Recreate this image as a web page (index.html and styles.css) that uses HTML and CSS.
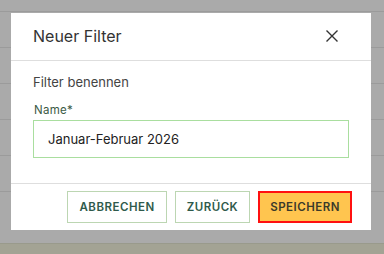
FILE: index.html
```html
<!DOCTYPE html>
<html lang="de">
<head>
    <meta charset="UTF-8">
    <meta name="viewport" content="width=device-width, initial-scale=1.0">
    <title>Neuer Filter</title>
    <link rel="stylesheet" href="styles.css">
</head>
<body>
    <div class="page">
        <div class="row row-top"></div>
        <div class="row"></div>
        <div class="row"></div>
        <div class="row"></div>
        <div class="row"></div>
        <div class="row"></div>
        <div class="spacer"></div>
        <div class="band"></div>
    </div>

    <div class="modal">
        <div class="modal-header">
            <h2 class="modal-title">Neuer Filter</h2>
            <button class="close-btn" aria-label="Schließen">
                <svg width="12" height="12" viewBox="0 0 12 12">
                    <path d="M0.5 0.5 L11.5 11.5 M11.5 0.5 L0.5 11.5" stroke="#333" stroke-width="1.4" fill="none"/>
                </svg>
            </button>
        </div>
        <div class="modal-body">
            <p class="hint">Filter benennen</p>
            <label class="field-label" for="filter-name">Name*</label>
            <input class="field-input" id="filter-name" type="text" value="Januar-Februar 2026">
        </div>
        <div class="modal-footer">
            <button class="btn">Abbrechen</button>
            <button class="btn">Zurück</button>
            <button class="btn btn-primary">Speichern</button>
        </div>
    </div>
</body>
</html>
```

FILE: styles.css
```css
body {
    margin: 0;
    font-family: 'Inter', 'Liberation Sans', sans-serif;
    background: #aaaaaa;
    color: #333;
    width: 384px;
    height: 254px;
    overflow: hidden;
}
.page {
    display: flex;
    flex-direction: column;
    height: 254px;
}
.row {
    height: 35px;
    border-bottom: 1px solid #9b9b9b;
}
.row-top {
    height: 11px;
}
.spacer {
    flex: 1;
}
.band {
    height: 10px;
    background-color: #a3a394;
    border-top: 1px solid #999a8c;
}
.modal {
    position: absolute;
    left: 11px;
    top: 13px;
    width: 360px;
    background-color: #ffffff;
    display: flex;
    flex-direction: column;
}
.modal-header {
    height: 47px;
    display: flex;
    align-items: center;
    justify-content: space-between;
    padding: 0 33px 0 22px;
    border-bottom: 1px solid #dedede;
}
.modal-title {
    margin: 0;
    font-size: 16px;
    font-weight: 400;
    color: #333;
    margin-top: -2px;
}
.close-btn {
    border: none;
    background: none;
    padding: 0;
    width: 12px;
    height: 12px;
    display: flex;
    cursor: pointer;
    margin-top: -1px;
}
.modal-body {
    padding: 13px 22px 25px 22px;
    display: flex;
    flex-direction: column;
}
.hint {
    margin: 0 0 13px 0;
    font-size: 13px;
    line-height: 16px;
    color: #444;
}
.field-label {
    font-size: 11.5px;
    line-height: 14px;
    font-weight: 400;
    color: #3b5a45;
    margin: 0 0 3px 1px;
    letter-spacing: 0.3px;
}
.field-input {
    box-sizing: border-box;
    width: 316px;
    height: 38px;
    border: 1px solid #a9de9f;
    padding: 0 14px;
    font-family: inherit;
    font-size: 13px;
    color: #222;
    outline: none;
}
.modal-footer {
    border-top: 1px solid #dedede;
    padding: 7px 19px 7px 0;
    display: flex;
    justify-content: flex-end;
    gap: 8px;
}
.btn {
    height: 32px;
    padding: 0 11px;
    font-family: inherit;
    font-size: 11.5px;
    font-weight: 600;
    letter-spacing: 0.5px;
    text-transform: uppercase;
    color: #2f5a4b;
    background-color: #ffffff;
    border: 1px solid #bcd6b2;
    cursor: pointer;
}
.btn-primary {
    background-color: #ffc54f;
    border: 2px solid #ff1010;
    color: #3a3a2a;
    padding: 0 10px;
}
```
